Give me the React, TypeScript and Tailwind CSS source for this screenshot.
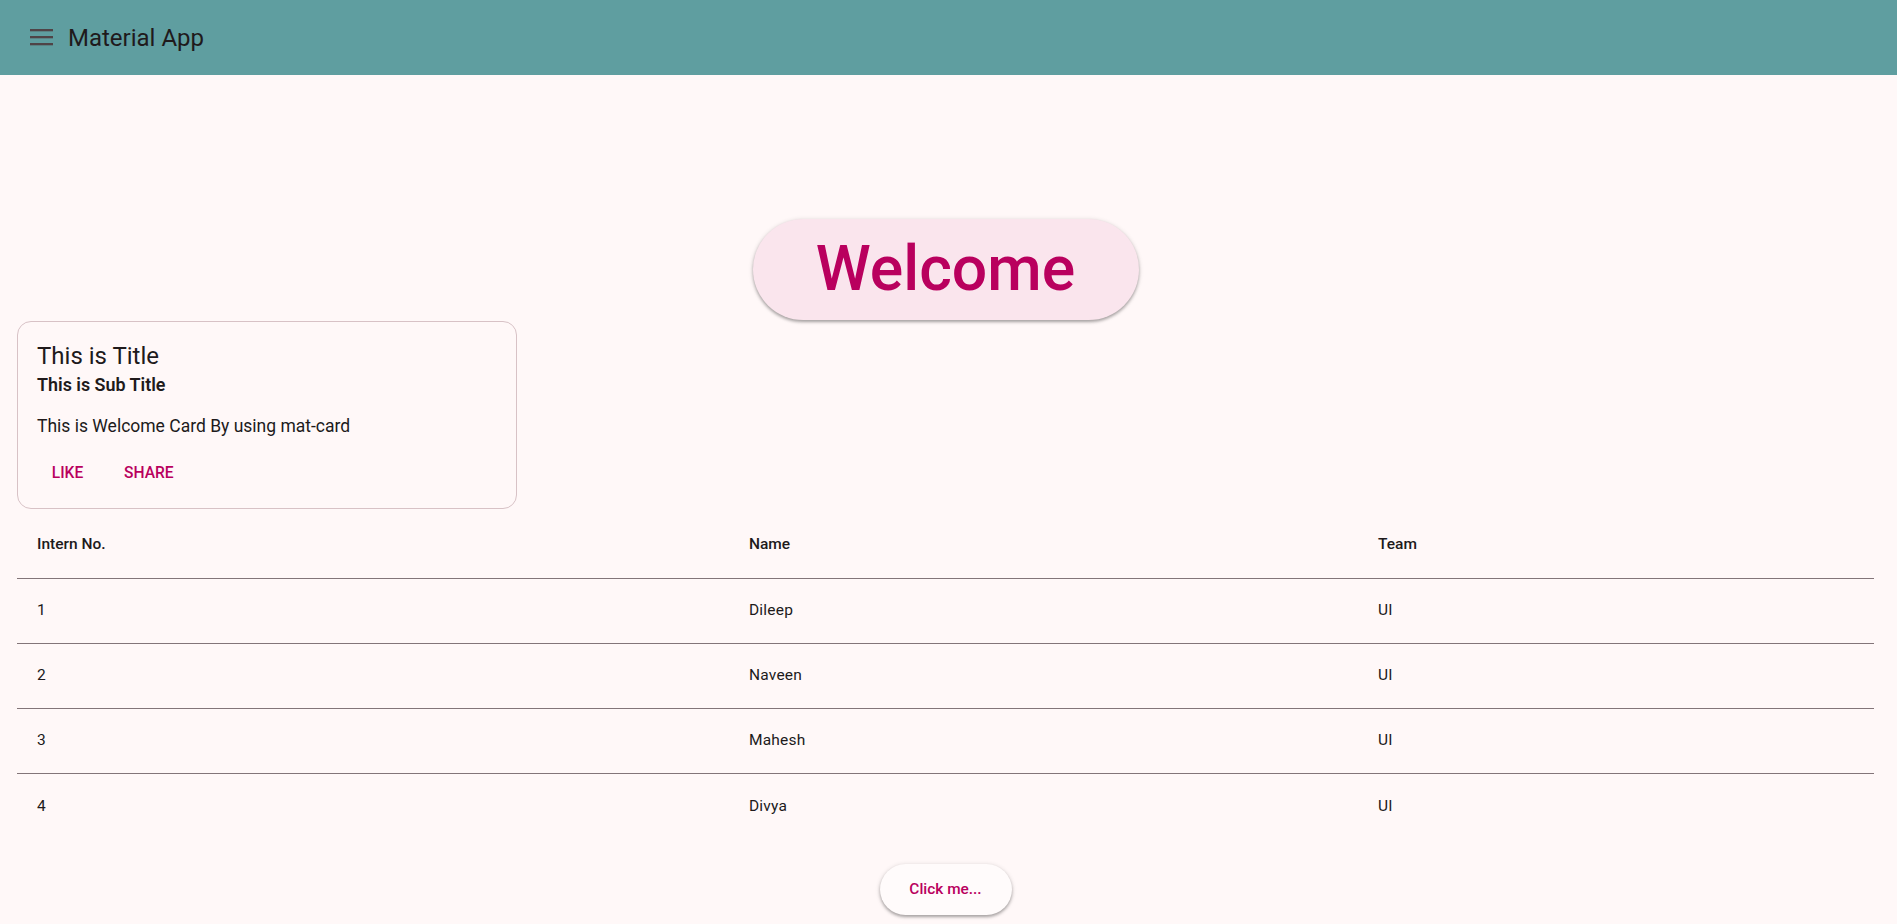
import React from "react";

const rows = [
  { no: "1", name: "Dileep", team: "UI" },
  { no: "2", name: "Naveen", team: "UI" },
  { no: "3", name: "Mahesh", team: "UI" },
  { no: "4", name: "Divya", team: "UI" },
];

export default function App() {
  return (
    <div
      className="min-h-[924px] w-full bg-[#fff8f8] text-[#201a1b]"
      style={{ fontFamily: "Roboto, 'Noto Sans', sans-serif" }}
    >
      {/* Toolbar */}
      <header className="flex h-[75px] items-center bg-[#5f9ea0] pl-[30px]">
        <svg width="23" height="17" viewBox="0 0 23 17" className="shrink-0">
          <rect x="0" y="0" width="23" height="2.3" fill="#4f4447" />
          <rect x="0" y="7" width="23" height="2.3" fill="#4f4447" />
          <rect x="0" y="14" width="23" height="2.3" fill="#4f4447" />
        </svg>
        <span className="ml-[15px] text-[24px] leading-none text-[#1f1a1c]">Material App</span>
      </header>

      <main className="w-[1891px]">
        {/* Welcome pill */}
        <div className="flex justify-center pt-[144px]">
          <div className="flex h-[101px] w-[386px] items-center justify-center rounded-full bg-[#fae5ed] shadow-[0_2px_3px_rgba(0,0,0,0.28),0_1px_4px_1px_rgba(0,0,0,0.1)]">
            <span className="text-[62.5px] font-medium leading-none text-[#b9005e]">Welcome</span>
          </div>
        </div>

        {/* Card */}
        <div className="ml-[17px] mt-px w-[500px] rounded-[14px] border border-[#d8c2c6] bg-[#fff8f8]">
          <div className="px-[19px] pt-[18px]">
            <div className="text-[24px] leading-[33px] text-[#201a1b]">This is Title</div>
            <div className="text-[17.9px] font-semibold leading-[23px] text-[#201a1b]">This is Sub Title</div>
          </div>
          <div className="px-[19px] pt-[19px] text-[17.5px] leading-[23px] text-[#201a1b]">
            This is Welcome Card By using mat-card
          </div>
          <div className="flex gap-[5px] pb-[11px] pl-[12px] pt-[12px]">
            <button className="flex h-[47px] min-w-[75px] items-center justify-center px-[14px] text-[15.6px] font-medium text-[#b9005e]">
              LIKE
            </button>
            <button className="flex h-[47px] min-w-[75px] items-center justify-center px-[14px] text-[15.6px] font-medium text-[#b9005e]">
              SHARE
            </button>
          </div>
        </div>

        {/* Table */}
        <div className="mx-[17px] mt-[2px]">
          <div className="grid h-[68px] grid-cols-[712px_629px_1fr] items-center border-b border-[#837579] text-[15.5px] font-medium text-[#201a1b]">
            <div className="pl-[20px]">Intern No.</div>
            <div className="pl-[20px]">Name</div>
            <div className="pl-[20px]">Team</div>
          </div>
          {rows.map((r, i) => (
            <div
              key={r.no}
              className={
                i < rows.length - 1
                  ? "grid h-[65px] grid-cols-[712px_629px_1fr] items-center border-b border-[#837579] text-[15.5px] tracking-[0.2px] text-[#201a1b]"
                  : "grid h-[65px] grid-cols-[712px_629px_1fr] items-center text-[15.5px] tracking-[0.2px] text-[#201a1b]"
              }
            >
              <div className="pl-[20px]">{r.no}</div>
              <div className="pl-[20px]">{r.name}</div>
              <div className="pl-[20px]">{r.team}</div>
            </div>
          ))}
        </div>

        {/* Click me */}
        <div className="flex justify-center pt-[25px] pb-[10px]">
          <button className="flex h-[51px] w-[132px] items-center justify-center rounded-full bg-[#fffbfb] text-[15.4px] font-medium text-[#b9005e] shadow-[0_2px_3px_rgba(0,0,0,0.28),0_1px_4px_1px_rgba(0,0,0,0.1)]">
            Click me...
          </button>
        </div>
      </main>
    </div>
  );
}
